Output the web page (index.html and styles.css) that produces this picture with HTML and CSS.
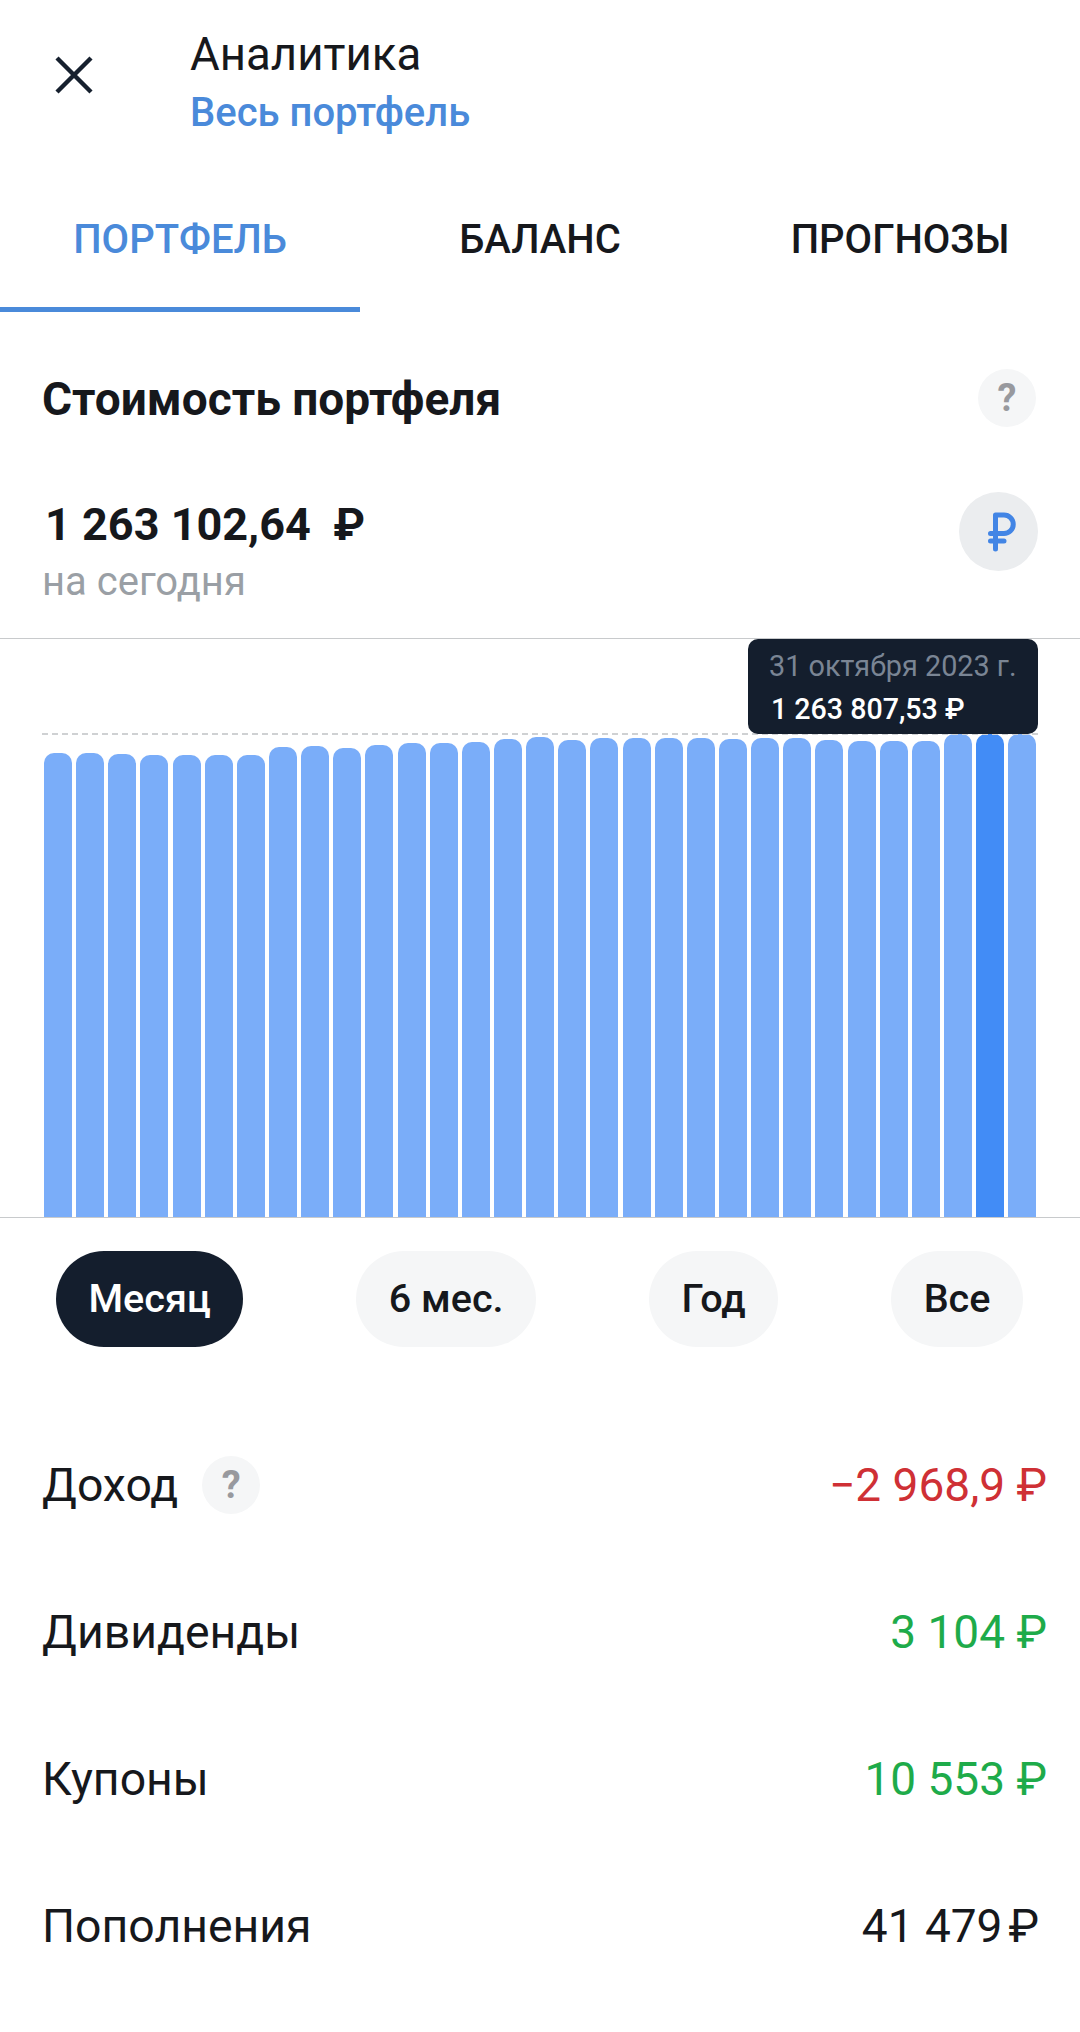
FILE: index.html
```html
<!DOCTYPE HTML>
<html lang="ru">
  <head>
    <title>Аналитика</title>
    <meta charset="utf-8">
    <link rel="stylesheet" href="styles.css">
  </head>
  <body>

  <header class="top">
    <svg class="close" width="38" height="38" viewBox="0 0 38 38"><path d="M2 2 L36 36 M36 2 L2 36" stroke="#16202e" stroke-width="4.4" fill="none"/></svg>
    <div class="top-text">
      <div class="top-title">Аналитика</div>
      <div class="top-sub">Весь портфель</div>
    </div>
  </header>

  <nav class="tabs">
    <div class="tab active">ПОРТФЕЛЬ</div>
    <div class="tab">БАЛАНС</div>
    <div class="tab">ПРОГНОЗЫ</div>
  </nav>

  <section class="head">
    <h1>Стоимость портфеля</h1>
    <span class="help">?</span>
  </section>

  <section class="value">
    <div>
      <div class="sum">1 263 102,64 &nbsp;₽</div>
      <div class="today">на сегодня</div>
    </div>
    <span class="currency">
      <svg class="currency-icon" width="30" height="40" viewBox="0 0 30 40"><path d="M8.5 3 V37 M3.5 21.5 H17 A9.25 9.25 0 0 0 17 3 H8.5 M3.5 29 H17" stroke="#4285e5" stroke-width="5" stroke-linecap="round" fill="none"/></svg>
    </span>
  </section>

  <section class="chart">
    <div class="dash"></div>
    <div class="bars" id="bars"></div>
    <div class="tip">
      <div class="tip-date">31 октября 2023 г.</div>
      <div class="tip-sum">1 263 807,53 ₽</div>
    </div>
  </section>

  <div class="periods">
    <span class="pill on">Месяц</span>
    <span class="pill">6 мес.</span>
    <span class="pill">Год</span>
    <span class="pill">Все</span>
  </div>

  <section class="rows">
    <div class="row"><span class="row-name">Доход <span class="help">?</span></span><span class="amount red">−2 968,9 ₽</span></div>
    <div class="row"><span class="row-name">Дивиденды</span><span class="amount green">3 104 ₽</span></div>
    <div class="row"><span class="row-name">Купоны</span><span class="amount green">10 553 ₽</span></div>
    <div class="row last"><span class="row-name">Пополнения</span><span class="amount">41 479<span class="rub-tight">₽</span></span></div>
  </section>

  <script src="chart.js"></script>

  </body>
</html>
```

FILE: chart.js
```js
// top edge of each bar, in page px
var tops = [753,753,754,755,755,755,755,747,746,748,745,743,743,742,739,737,740,738,738,738,738,739,738,738,740,741,741,741,734,734,734];
var bottom = 1217;
var bars = document.getElementById('bars');
for (var i = 0; i < tops.length; i++) {
  var b = document.createElement('div');
  b.className = i === 29 ? 'bar current' : 'bar';
  b.style.height = (bottom - tops[i]) + 'px';
  bars.appendChild(b);
}
```

FILE: styles.css
```css
html {
  height: 100%;
}
body {
  margin: 0;
  background: #ffffff;
  color: #16181c;
  font-family: Roboto, sans-serif;
  height: 2032px;
  overflow: hidden;
}

.top {
  display: flex;
  height: 142px;
  box-sizing: border-box;
  padding: 30px 0 0 55px;
}
.close {
  margin-top: 26px;
}
.top-text {
  margin-left: 97px;
}
.top-title {
  font-size: 45.6px;
  line-height: 50px;
}
.top-sub {
  font-size: 40px;
  font-weight: 500;
  line-height: 50px;
  color: #4a8ada;
  margin-top: 8px;
}

.tabs {
  display: flex;
}
.tab {
  flex: 1;
  padding: 48px 0 17px;
  text-align: center;
  font-size: 40px;
  font-weight: 500;
  line-height: 100px;
  border-bottom: 5px solid transparent;
}
.tab.active {
  color: #4a8ada;
  border-bottom-color: #4a8ada;
}

.head {
  display: flex;
  justify-content: space-between;
  align-items: center;
  height: 153px;
  padding: 9px 44px 0 42px;
}
.head h1 {
  margin: 0;
  padding-top: 2px;
  font-size: 46px;
  font-weight: 700;
  line-height: 50px;
}
.help {
  display: inline-flex;
  align-items: center;
  justify-content: center;
  width: 58px;
  height: 58px;
  border-radius: 50%;
  background: #f5f6f7;
  color: #98999e;
  font-size: 38px;
  font-weight: 700;
}

.value {
  display: flex;
  justify-content: space-between;
  align-items: flex-start;
  height: 146px;
  padding: 18px 42px 0 42px;
  border-bottom: 1px solid #c8cacc;
}
.sum {
  margin-top: 8px;
  font-size: 45px;
  font-weight: 700;
  line-height: 50px;
  padding-left: 3px;
}
.today {
  margin-top: 9px;
  font-size: 40px;
  line-height: 46px;
  color: #9a9fa5;
}
.currency {
  display: flex;
  align-items: center;
  justify-content: center;
  width: 79px;
  height: 79px;
  border-radius: 50%;
  background: #ebedef;
}
.currency-icon {
  margin-left: 6px;
}

.chart {
  position: relative;
  height: 578px;
  border-bottom: 1px solid #c8cacc;
}
.bars {
  display: flex;
  align-items: flex-end;
  gap: 4.13px;
  height: 578px;
  padding: 0 44px;
  box-sizing: border-box;
}
.bar {
  flex: 1;
  background: #7aadf9;
  border-radius: 10px 10px 0 0;
}
.bar.current {
  background: #428cf6;
}
.dash {
  position: absolute;
  top: 94px;
  left: 42px;
  right: 42px;
  border-top: 2px dashed #cfd1d3;
}
.tip {
  position: absolute;
  top: 0;
  right: 42px;
  width: 290px;
  height: 95px;
  box-sizing: border-box;
  padding: 7px 0 0 21px;
  background: #141e2d;
  border-radius: 10px;
}
.tip-date {
  font-size: 28.8px;
  line-height: 40px;
  color: #7a8594;
}
.tip-sum {
  margin: 3px 0 0 2px;
  font-size: 28.6px;
  font-weight: 500;
  line-height: 40px;
  color: #ffffff;
}

.periods {
  display: flex;
  justify-content: space-between;
  margin-top: 33px;
  padding: 0 57px 0 56px;
}
.pill {
  padding: 0 32.5px;
  font-size: 39.6px;
  font-weight: 500;
  line-height: 96px;
  border-radius: 48px;
  background: #f5f6f7;
}
.pill.on {
  background: #141e2d;
  color: #ffffff;
}

.rows {
  margin-top: 64px;
  padding: 0 33px 0 42px;
  font-size: 46.4px;
}
.row {
  display: flex;
  justify-content: space-between;
  align-items: center;
  height: 147px;
}
.row.last {
  padding-right: 8px;
}
.row-name {
  display: flex;
  align-items: center;
  gap: 24px;
}
.amount {
  font-size: 46px;
}
.rub-tight {
  margin-left: 6px;
}
.red {
  color: #cf3035;
}
.green {
  color: #1eab4a;
}
```
